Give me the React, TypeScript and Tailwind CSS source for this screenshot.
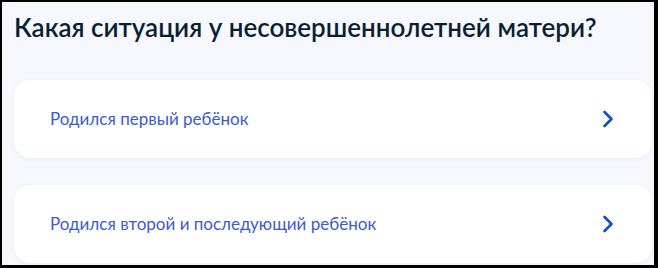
import React from "react";

const Chevron = () => (
  <svg width="12" height="18" viewBox="0 0 12 18" fill="none">
    <path d="M2.5 2 L9.5 9 L2.5 16" stroke="#0d4cd3" strokeWidth="2.6" strokeLinecap="round" strokeLinejoin="round" />
  </svg>
);

const Card = ({ label }: { label: string }) => (
  <div className="flex items-center justify-between bg-white rounded-[16px] h-[78px] pl-[36px] pr-[38px] shadow-[0_1px_4px_rgba(100,130,200,0.12)]">
    <span className="text-[17px] text-[#3a5ad6] leading-none -mt-[2px]">{label}</span>
    <Chevron />
  </div>
);

export default function App() {
  return (
    <div
      className="w-[658px] h-[268px] overflow-hidden border-black border-t-2 border-l-2 border-b-[3px] border-r-4 bg-[#f6f8fd]"
      style={{ fontFamily: "Lato, 'Noto Sans', sans-serif" }}
    >
      <div className="pl-[12px] pr-[2px]">
        <h1 className="text-[26px] font-semibold text-[#0b1f33] leading-none pt-[12px]">
          Какая ситуация у несовершеннолетней матери?
        </h1>
        <div className="mt-[40px] flex flex-col gap-[27px]">
          <Card label="Родился первый ребёнок" />
          <Card label="Родился второй и последующий ребёнок" />
        </div>
      </div>
    </div>
  );
}
